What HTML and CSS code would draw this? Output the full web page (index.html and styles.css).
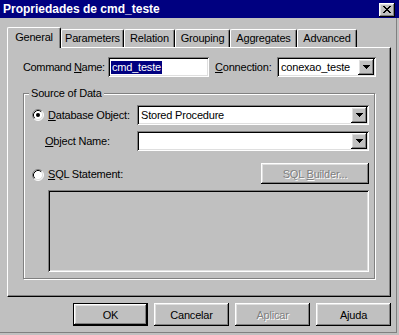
FILE: index.html
```html
<!DOCTYPE html>
<html lang="pt">
<head>
<meta charset="utf-8">
<title>Propriedades de cmd_teste</title>
<link rel="stylesheet" href="styles.css">
</head>
<body>
<div class="window">
  <div class="titlebar">
    <span class="title">Propriedades de cmd_teste</span>
    <span class="close btn-raised">
      <svg width="8" height="7" viewBox="0 0 8 7" shape-rendering="crispEdges"><path fill="#000" d="M0 0h2v1H0zM6 0h2v1H6zM1 1h2v1H1zM5 1h2v1H5zM2 2h4v1H2zM3 3h2v1H3zM2 4h4v1H2zM1 5h2v1H1zM5 5h2v1H5zM0 6h2v1H0zM6 6h2v1H6z"/></svg>
    </span>
  </div>
  <div class="content">
    <div class="tabs">
      <div class="tab active t-general">General</div>
      <div class="tab t-params">Parameters</div>
      <div class="tab t-relation">Relation</div>
      <div class="tab t-grouping">Grouping</div>
      <div class="tab t-aggr">Aggregates</div>
      <div class="tab t-adv">Advanced</div>
    </div>
    <div class="panel">
      <div class="row1">
        <span class="lbl lbl-cmd">Command <u>N</u>ame:</span>
        <span class="field field-cmd"><span class="sel">cmd_teste</span></span>
        <span class="lbl lbl-conn"><u>C</u>onnection:</span>
        <span class="field combo combo-conn"><span class="combo-text">conexao_teste</span><span class="drop btn-raised"><svg width="7" height="4" viewBox="0 0 7 4" shape-rendering="crispEdges"><path fill="#000" d="M0 0h7v1H0zM1 1h5v1H1zM2 2h3v1H2zM3 3h1v1H3z"/></svg></span></span>
      </div>
      <div class="group">
        <div class="legend">Source of Data</div>
        <div class="grow grow-db">
          <svg class="radio" width="12" height="12" viewBox="0 0 12 12">
            <circle cx="6" cy="6" r="5" fill="#fff"/>
            <path d="M2.11 9.89A5.5 5.5 0 0 1 9.89 2.11" fill="none" stroke="#808080"/>
            <path d="M9.89 2.11A5.5 5.5 0 0 1 2.11 9.89" fill="none" stroke="#fff"/>
            <path d="M2.82 9.18A4.5 4.5 0 0 1 9.18 2.82" fill="none" stroke="#000"/>
            <path d="M9.18 2.82A4.5 4.5 0 0 1 2.82 9.18" fill="none" stroke="#dfdfdf"/>
            <circle cx="6" cy="6" r="2" fill="#000"/>
          </svg>
          <span class="glbl glbl-db"><u>D</u>atabase Object:</span>
          <span class="field combo combo-wide"><span class="combo-text">Stored Procedure</span><span class="drop btn-raised"><svg width="7" height="4" viewBox="0 0 7 4" shape-rendering="crispEdges"><path fill="#000" d="M0 0h7v1H0zM1 1h5v1H1zM2 2h3v1H2zM3 3h1v1H3z"/></svg></span></span>
        </div>
        <div class="grow grow-obj">
          <span class="glbl glbl-obj"><u>O</u>bject Name:</span>
          <span class="field combo combo-wide"><span class="combo-text"></span><span class="drop btn-raised"><svg width="7" height="4" viewBox="0 0 7 4" shape-rendering="crispEdges"><path fill="#000" d="M0 0h7v1H0zM1 1h5v1H1zM2 2h3v1H2zM3 3h1v1H3z"/></svg></span></span>
        </div>
        <div class="grow grow-sql">
          <span class="radio-lbl">
            <svg class="radio" width="12" height="12" viewBox="0 0 12 12">
              <circle cx="6" cy="6" r="5" fill="#fff"/>
              <path d="M2.11 9.89A5.5 5.5 0 0 1 9.89 2.11" fill="none" stroke="#808080"/>
              <path d="M9.89 2.11A5.5 5.5 0 0 1 2.11 9.89" fill="none" stroke="#fff"/>
              <path d="M2.82 9.18A4.5 4.5 0 0 1 9.18 2.82" fill="none" stroke="#000"/>
              <path d="M9.18 2.82A4.5 4.5 0 0 1 2.82 9.18" fill="none" stroke="#dfdfdf"/>
            </svg>
            <span class="glbl"><u>S</u>QL Statement:</span>
          </span>
          <span class="btn btn-raised btn-sqlb disabled"><span>SQL <u>B</u>uilder...</span></span>
        </div>
        <div class="textarea"></div>
      </div>
    </div>
    <div class="buttons">
      <span class="btn btn-raised btn-default">OK</span>
      <span class="btn btn-raised">Cancelar</span>
      <span class="btn btn-raised disabled">Aplicar</span>
      <span class="btn btn-raised">Ajuda</span>
    </div>
  </div>
</div>
</body>
</html>
```
FILE: styles.css
```css
html, body {
  margin: 0;
  padding: 0;
  background: #c0c0c0;
}
body {
  font-family: "Liberation Sans", Arial, sans-serif;
  font-size: 11px;
  letter-spacing: -0.2px;
  color: #000;
  width: 399px;
  height: 335px;
  overflow: hidden;
}
u { text-underline-offset: 1px; }
.window {
  width: 399px;
  height: 335px;
  display: flex;
  flex-direction: column;
}
.titlebar {
  height: 18px;
  background: #000080;
  display: flex;
  align-items: center;
  justify-content: space-between;
  padding: 0 4px 0 3px;
  box-sizing: border-box;
  flex: none;
}
.title {
  color: #fff;
  font-weight: bold;
  font-size: 12px;
  letter-spacing: 0;
  line-height: 18px;
}
.btn-raised {
  background: #c0c0c0;
  box-shadow: inset -1px -1px #000, inset 1px 1px #fff, inset -2px -2px #808080, inset 2px 2px #dfdfdf;
}
.close {
  width: 16px;
  height: 14px;
  margin-top: 2px;
  display: flex;
  align-items: center;
  justify-content: center;
  box-sizing: border-box;
}
.close svg { display: block; margin-top: -1px; }
.content {
  width: 397px;
  height: 315px;
  box-sizing: border-box;
  border-right: 1px solid #808080;
  border-bottom: 1px solid #808080;
  padding: 9px 0 0 7px;
}
.tabs {
  display: flex;
  align-items: flex-end;
  height: 20px;
}
.tab {
  height: 18px;
  box-sizing: border-box;
  border-top: 1px solid #fff;
  border-left: 1px solid #fff;
  border-right: 1px solid #000;
  border-radius: 2px 2px 0 0;
  box-shadow: inset -1px 0 #808080;
  text-align: center;
  line-height: 17px;
  background: #c0c0c0;
}
.tab.active {
  height: 21px;
  margin-bottom: -1px;
  position: relative;
  z-index: 1;
  line-height: 19px;
}
.t-general { width: 54px; }
.t-params { width: 63px; }
.t-relation { width: 51px; }
.t-grouping { width: 55px; }
.t-aggr { width: 67px; }
.t-adv { width: 60px; }
.panel {
  width: 384px;
  height: 250px;
  box-sizing: border-box;
  border-top: 1px solid #fff;
  border-left: 1px solid #fff;
  border-right: 1px solid #000;
  border-bottom: 1px solid #000;
  box-shadow: inset -1px -1px #808080;
  padding: 9px 0 0 15px;
}
.row1 {
  display: flex;
  align-items: center;
  height: 20px;
}
.lbl { white-space: nowrap; }
.lbl-cmd { width: 85px; letter-spacing: -0.35px; }
.lbl-conn { width: 62px; margin-left: 6px; }
.field {
  height: 20px;
  box-sizing: border-box;
  background: #fff;
  box-shadow: inset 1px 1px #808080, inset -1px -1px #fff, inset 2px 2px #000, inset -2px -2px #dfdfdf;
  display: flex;
  align-items: center;
}
.field-cmd {
  width: 101px;
  padding-left: 3px;
}
.sel {
  background: #000080;
  color: #fff;
  line-height: 13px;
  padding: 0 1px;
}
.combo {
  padding: 2px;
  justify-content: space-between;
}
.combo-conn { width: 99px; }
.combo-wide { width: 232px; }
.combo-text {
  padding-left: 2px;
  line-height: 16px;
  white-space: nowrap;
}
.drop {
  width: 16px;
  height: 16px;
  display: flex;
  align-items: center;
  justify-content: center;
  flex: none;
}
.drop svg { display: block; }
.group {
  margin-top: 16px;
  width: 352px;
  box-sizing: border-box;
  border: 1px solid #808080;
  box-shadow: inset 1px 1px #fff, 1px 1px #fff;
  padding: 0 5px 6px 0;
}
.legend {
  margin-top: -7px;
  margin-left: 5px;
  padding: 0 2px;
  width: fit-content;
  background: #c0c0c0;
  line-height: 13px;
}
.grow {
  display: flex;
  align-items: center;
}
.grow-db {
  margin-top: 5px;
  padding-left: 8px;
  height: 20px;
}
.radio {
  display: block;
  flex: none;
  margin-right: 4px;
}
.glbl { white-space: nowrap; }
.glbl-db { width: 89px; }
.grow-obj {
  margin-top: 6px;
  padding-left: 21px;
  height: 20px;
}
.glbl-obj { width: 92px; }
.grow-sql {
  margin-top: 12px;
  padding-left: 8px;
  align-items: flex-start;
  justify-content: space-between;
  height: 21px;
}
.radio-lbl {
  display: flex;
  align-items: center;
  margin-top: 5px;
  line-height: 13px;
}
.btn {
  display: flex;
  align-items: center;
  justify-content: center;
  box-sizing: border-box;
}
.btn-sqlb {
  width: 108px;
  height: 21px;
}
.disabled {
  color: #808080;
  text-shadow: 1px 1px 0 #fff;
}
.textarea {
  margin: 6px 0 0 24px;
  width: 321px;
  height: 82px;
  box-sizing: border-box;
  box-shadow: inset 1px 1px #808080, inset -1px -1px #fff, inset 2px 2px #000, inset -2px -2px #dfdfdf;
}
.buttons {
  width: 384px;
  margin-top: 6px;
  display: flex;
  justify-content: flex-end;
  gap: 6px;
}
.buttons .btn {
  width: 75px;
  height: 23px;
}
.btn-default {
  border: 1px solid #000;
}
```
